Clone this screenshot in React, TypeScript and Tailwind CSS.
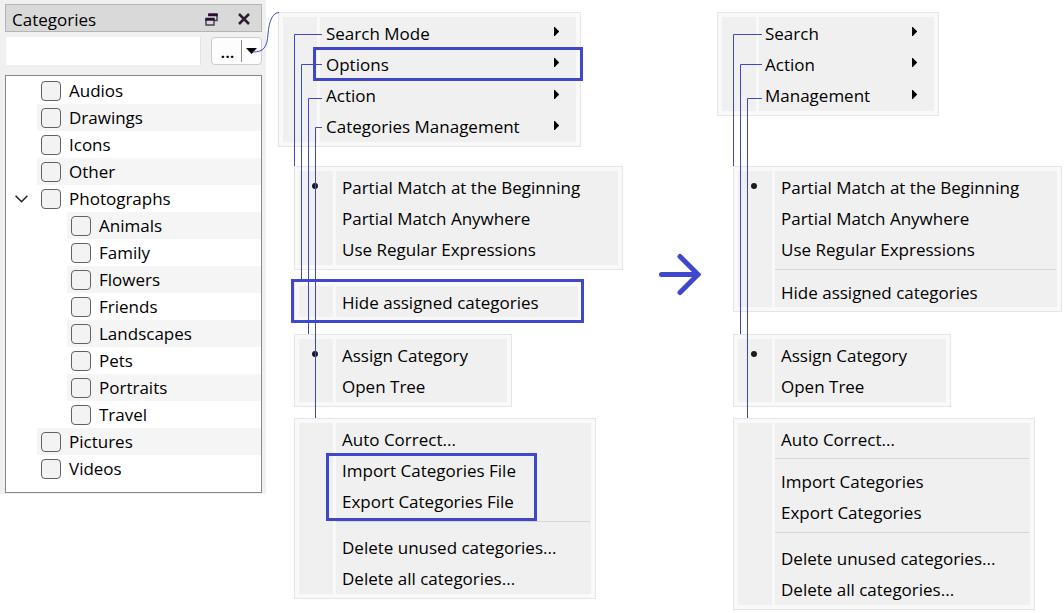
import type { ReactNode } from "react";

type TreeNode = { name: string; child?: boolean; expanded?: boolean };

const TREE: TreeNode[] = [
  { name: "Audios" },
  { name: "Drawings" },
  { name: "Icons" },
  { name: "Other" },
  { name: "Photographs", expanded: true },
  { name: "Animals", child: true },
  { name: "Family", child: true },
  { name: "Flowers", child: true },
  { name: "Friends", child: true },
  { name: "Landscapes", child: true },
  { name: "Pets", child: true },
  { name: "Portraits", child: true },
  { name: "Travel", child: true },
  { name: "Pictures" },
  { name: "Videos" },
];

const GROUP_HEIGHT: Record<number, string> = {
  1: "min-h-[31px]",
  2: "min-h-[63px]",
  3: "min-h-[94px]",
  4: "min-h-[125px]",
};

type MenuProps = {
  label: string;
  groups: string[][];
  className?: string;
  submenu?: boolean;
  checkedFirst?: boolean;
  looseEnd?: boolean;
};

function Menu({ label, groups, className = "", submenu, checkedFirst, looseEnd }: MenuProps) {
  return (
    <div role="menu" aria-label={label} className={`flex gap-[3px] border border-[#e5e5e5] bg-[#f9f9f9] p-1 ${className}`}>
      <div className="w-[34px] shrink-0 bg-[#f0f0f0] pt-3 pl-[13px]">
        {checkedFirst && <div className="size-[6px] rounded-full bg-[#1b1b1b]" />}
      </div>
      <div className="grow bg-[#f0f0f0]">
        {groups.map((items, g) => (
          <div key={items[0]}>
            {g > 0 && (
              <div
                role="separator"
                className={`mt-1 mr-px h-px bg-[#d7d7d7] ${looseEnd && g === groups.length - 1 ? "mb-[9px]" : "mb-1.5"}`}
              />
            )}
            <div className={`grid auto-rows-fr ${GROUP_HEIGHT[items.length]}`}>
              {items.map((item) => (
                <button
                  key={item}
                  type="button"
                  role="menuitem"
                  className="flex items-center justify-between pt-0.5 pr-[17px] pl-1.5 text-left leading-6 whitespace-nowrap"
                >
                  {item}
                  {submenu && (
                    <svg width="5" height="9" viewBox="0 0 5 9" className="mb-1" aria-hidden="true">
                      <path d="M0 0 H0.800 L5 4.200 V4.800 L0.800 9 H0 Z" fill="#000" />
                    </svg>
                  )}
                </button>
              ))}
            </div>
          </div>
        ))}
      </div>
    </div>
  );
}

function Annotations({ children }: { children: ReactNode }) {
  return (
    <svg
      width="360"
      height="613"
      viewBox="0 0 360 613"
      fill="none"
      stroke="#3f48cc"
      className="pointer-events-none absolute top-0 left-0 overflow-visible"
      aria-hidden="true"
    >
      {children}
    </svg>
  );
}

function CategoriesPanel() {
  return (
    <aside className="w-[266px] shrink-0 bg-[#f0f0f0] px-[5px] pt-1 pb-px">
      <header className="mr-[-1px] flex h-7 items-center border border-[#b4b4b4] bg-[#d9d9d9] pt-1 pr-[11px] pl-1.5">
        <h1 className="grow leading-6">Categories</h1>
        <button type="button" aria-label="Float panel" className="mr-5 mb-0.5">
          <svg width="13" height="13" viewBox="0 0 13 13" fill="none">
            <path d="M4 3 V1 M12 1 V7.500 H9.500" stroke="#4a3a50" strokeWidth="1.500" />
            <path d="M3.250 1.750 H12.750" stroke="#2b0f36" strokeWidth="3" />
            <path d="M1 6 V12 H9 V6" stroke="#4a4450" strokeWidth="1.500" />
            <path d="M0.250 6.250 H9.750" stroke="#2b0f36" strokeWidth="3" />
          </svg>
        </button>
        <button type="button" aria-label="Close panel" className="mb-0.5">
          <svg width="12" height="12" viewBox="0 0 12 12" fill="none" stroke="#2b1f30" strokeWidth="2.500">
            <path d="M1 1 L11 11 M11 1 L1 11" />
          </svg>
        </button>
      </header>
      <div className="mt-[5px] flex h-7 justify-between pl-px">
        <input type="text" aria-label="Filter categories" className="w-[195px] border-r border-[#e3e3e3] bg-white px-2 outline-none" />
        <div className="mr-[-1px] flex w-[51px] rounded-[4px] border border-[#cccccc] bg-[#fdfdfd] py-0.5">
          <button type="button" className="grow border-r border-[#8a8a8a] pl-0.5 leading-6 font-semibold" aria-label="Browse">
            ...
          </button>
          <button type="button" className="flex w-[19px] items-center justify-center" aria-label="Show menu">
            <svg width="11" height="6" viewBox="0 0 11 6" aria-hidden="true">
              <path d="M0 0 H11 L5.500 6 Z" fill="#000" />
            </svg>
          </button>
        </div>
      </div>
      <ul className="mt-2.5 mr-[-1px] border border-[#828790] bg-white pt-px pb-2.5">
        {TREE.map((node, i) => (
          <li key={node.name} className="flex h-[27px]">
            <div className={`flex shrink-0 items-center pl-[9px] ${node.child ? "w-[61px]" : "w-[31px]"}`}>
              {node.expanded && (
                <button type="button" aria-label={`Collapse ${node.name}`}>
                  <svg width="13" height="8" viewBox="0 0 13 8" fill="none" stroke="#222" strokeWidth="1.600">
                    <path d="M0.600 0.800 L6.500 6.700 L12.400 0.800" />
                  </svg>
                </button>
              )}
            </div>
            <label className={`flex grow items-center gap-2 pl-1 leading-6 ${i % 2 ? "bg-[#f5f5f5]" : ""}`}>
              <input type="checkbox" className="size-5 appearance-none rounded-[4px] border border-[#626262] bg-[#f3f3f3]" />
              {node.name}
            </label>
          </li>
        ))}
      </ul>
    </aside>
  );
}

export default function App() {
  return (
    <main className="flex items-start bg-white font-['Open_Sans','Noto_Sans',sans-serif] text-[17px] text-black">
      <CategoriesPanel />

      <section aria-label="Current menus" className="relative ml-3 flex w-[345px] shrink-0 flex-col items-start pt-3">
        <Menu label="Categories menu" submenu className="w-[303px]" groups={[["Search Mode", "Options", "Action", "Categories Management"]]} />
        <div className="mt-[19px] flex flex-col items-start pl-4">
          <Menu
            label="Search mode"
            checkedFirst
            className="w-[329px]"
            groups={[["Partial Match at the Beginning", "Partial Match Anywhere", "Use Regular Expressions"]]}
          />
          <Menu label="Options" className="mt-[11px] w-[289px]" groups={[["Hide assigned categories"]]} />
          <Menu label="Action" checkedFirst className="mt-3 w-[218px]" groups={[["Assign Category", "Open Tree"]]} />
          <Menu
            label="Categories management"
            looseEnd
            className="mt-[11px] w-[302px]"
            groups={[
              ["Auto Correct...", "Import Categories File", "Export Categories File"],
              ["Delete unused categories...", "Delete all categories..."],
            ]}
          />
        </div>
        <Annotations>
          <path d="M-25 52 C-14 52 -11 47 -10 34 C-9 22 -6 13 1 12.500" />
          <path d="M44 34.500 H16.500 V166 M44 64.500 H23.500 V279 M44 98.500 H30.500 V334 M44 127.500 H37.500 V418" />
          <g strokeWidth="3">
            <rect x="36.500" y="48.500" width="267" height="31" />
            <rect x="14.500" y="280.500" width="290" height="41" />
            <rect x="49.500" y="454.500" width="208" height="65" />
          </g>
        </Annotations>
      </section>

      <div className="flex min-w-[42px] grow justify-center pt-[253px] pl-5">
        <svg width="42" height="43" viewBox="0 0 42 43" fill="none" stroke="#3f48cc" strokeWidth="5" strokeLinecap="round" role="img" aria-label="becomes">
          <path d="M2.500 21.500 H39 M21 3.500 L39 21.500 L21 39.500" strokeLinejoin="miter" />
        </svg>
      </div>

      <section aria-label="New menus" className="relative mr-0.5 flex w-[345px] shrink-0 flex-col items-start pt-3">
        <Menu label="Categories menu" submenu className="w-[222px]" groups={[["Search", "Action", "Management"]]} />
        <div className="mt-[50px] flex flex-col items-start pl-4">
          <Menu
            label="Search"
            checkedFirst
            className="w-[329px]"
            groups={[["Partial Match at the Beginning", "Partial Match Anywhere", "Use Regular Expressions"], ["Hide assigned categories"]]}
          />
          <Menu label="Action" checkedFirst className="mt-[22px] w-[218px]" groups={[["Assign Category", "Open Tree"]]} />
          <Menu
            label="Management"
            looseEnd
            className="mt-[11px] w-[302px]"
            groups={[["Auto Correct..."], ["Import Categories", "Export Categories"], ["Delete unused categories...", "Delete all categories..."]]}
          />
        </div>
        <Annotations>
          <path d="M45 34.500 H16.500 V166 M45 64.500 H23.500 V334 M45 98.500 H30.500 V418" />
        </Annotations>
      </section>
    </main>
  );
}
